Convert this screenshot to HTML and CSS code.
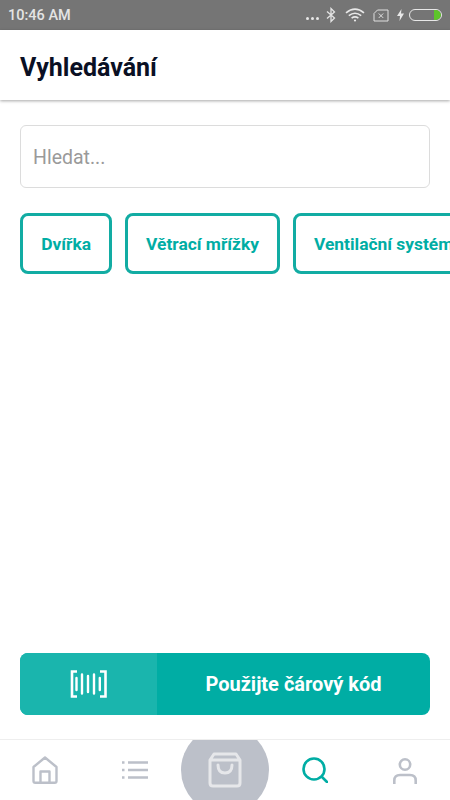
FILE: index.html
```html
<!DOCTYPE html>
<html lang="cs">
<head>
<meta charset="utf-8">
<title>Vyhledávání</title>
<link rel="stylesheet" href="styles.css">
</head>
<body>
<div class="app">
  <div class="status">
    <span class="time">10:46 AM</span>
    <div class="status-icons">
      <span class="dots"><i></i><i></i><i></i></span>
      <svg class="ic-bt" width="10" height="16" viewBox="0 0 10 16" fill="none" stroke="#e4e4e4" stroke-width="1.3"><path d="M1 4.5 8.5 11 5 14.500V1.500L8.500 5 1 11.500"/></svg>
      <svg class="ic-wifi" width="20" height="14" viewBox="0 0 20 14" fill="none" stroke="#e8e8e8" stroke-width="1.6"><path d="M1 4.800Q10-2.500 19 4.800M3.800 7.600Q10 2.800 16.200 7.600M6.600 10.200Q10 7.600 13.400 10.200"/><circle cx="10" cy="12.500" r="1.100" fill="#e8e8e8" stroke="none"/></svg>
      <svg class="ic-sim" width="16" height="13" viewBox="0 0 16 13" fill="none" stroke="#e0e0e0" stroke-width="1"><path d="M4.500 1H15V12H1V4.500ZM5.800 4.500l4.400 4.400M10.200 4.500 5.800 8.900"/></svg>
      <svg class="ic-bolt" width="7" height="12" viewBox="0 0 7 12"><path d="M4.500 0 0 7H3L2.500 12 7 4.500H4Z" fill="#e8e8e8"/></svg>
      <div class="battery"><div class="battery-level"></div></div>
    </div>
  </div>
  <header class="topbar"><h1 class="title">Vyhledávání</h1></header>
  <main class="content">
    <div class="search">Hledat...</div>
    <div class="chips">
      <div class="chip">Dvířka</div>
      <div class="chip">Větrací mřížky</div>
      <div class="chip">Ventilační systémy</div>
    </div>
    <div class="barcode">
      <div class="barcode-icon">
        <svg width="38" height="28" viewBox="0 0 38 28" fill="none" stroke="#fff" stroke-width="2.400"><path d="M7 1.500H2V26.500H7M30 1.500H35.500V26.500H30" stroke-width="2.600"/><path d="M6.500 8V20M12 4.500V23.500M18 6V22M24 4.500V23.500M29.800 8V20" stroke-linecap="round"/></svg>
      </div>
      <div class="barcode-label">Použijte čárový kód</div>
    </div>
  </main>
  <nav class="tabs">
    <div class="tab">
      <svg width="26" height="28" viewBox="0 0 26 28" fill="none" stroke="#bcc0c9" stroke-width="2.400" stroke-linejoin="round"><path d="M13 1.500 1.500 11V25Q1.500 26.800 3.300 26.800H22.700Q24.500 26.800 24.500 25V11ZM8.500 26.800V15.500H17.500V26.800"/></svg>
    </div>
    <div class="tab">
      <svg width="26" height="18" viewBox="0 0 26 18" fill="none" stroke="#bcc0c9" stroke-width="2.600"><path d="M6 1.500H26M6 9H26M6 16.500H26"/><path d="M0 1.500H2.500M0 9H2.500M0 16.500H2.500" stroke-width="2.400"/></svg>
    </div>
    <div class="tab">
      <div class="cart-circle">
        <svg width="34" height="36" viewBox="0 0 34 36" fill="none" stroke="#e6e7ea" stroke-width="3" stroke-linejoin="round" stroke-linecap="round"><path d="M6 2H28L32 8V31Q32 34 29 34H5Q2 34 2 31V8ZM2 8H32M10 13Q10 21 17 21T24 13"/></svg>
      </div>
    </div>
    <div class="tab">
      <svg width="26" height="26" viewBox="0 0 26 26" fill="none" stroke="#00ada4" stroke-width="2.600" stroke-linecap="round"><circle cx="12" cy="12" r="10.500"/><path d="M20 20 25 25"/></svg>
    </div>
    <div class="tab tab-person">
      <svg width="24" height="26" viewBox="0 0 24 26" fill="none" stroke="#bcc0c9" stroke-width="2.600"><circle cx="12" cy="6.500" r="5.200"/><path d="M1.300 26V22.500Q1.300 17 7 17H17Q22.700 17 22.700 22.500V26"/></svg>
    </div>
  </nav>
</div>
</body>
</html>
```
FILE: styles.css
```css
* { box-sizing: border-box; }
html, body { margin: 0; padding: 0; }
body { width: 450px; height: 800px; overflow: hidden; background: #fff; font-family: Roboto, sans-serif; }
.app { width: 450px; height: 800px; display: flex; flex-direction: column; overflow: hidden; }
.status { height: 30px; flex: none; background: #757575; display: flex; align-items: center; justify-content: space-between; padding: 0 8px; }
.time { color: #e4e4e4; font-size: 14.500px; font-weight: 500; }
.status-icons { display: flex; align-items: center; }
.dots { display: flex; gap: 2px; margin: 6px 7px 0 0; }
.dots i { width: 3px; height: 3px; border-radius: 50%; background: #e8e8e8; }
.ic-bt { margin-right: 9px; }
.ic-wifi { margin-right: 8px; }
.ic-sim { margin-right: 8px; }
.ic-bolt { margin-right: 5px; }
.battery { width: 33px; height: 12px; border: 1px solid #e8e8e8; border-radius: 6px; display: flex; justify-content: flex-end; overflow: hidden; }
.battery-level { width: 7px; background: #5dc52a; border-radius: 0 5px 5px 0; }
.topbar { height: 70px; flex: none; background: #fff; display: flex; align-items: center; padding: 4px 20px 0; box-shadow: 0 1px 3px rgba(0,0,0,.35); position: relative; }
.title { margin: 0; font-size: 25px; font-weight: 700; color: #0a1024; }
.content { flex: 1; padding: 25px 0 24px 20px; display: flex; flex-direction: column; min-height: 0; }
.search { width: 410px; height: 63px; border: 1px solid #dcdcdc; border-radius: 6px; padding: 2px 12px 0; display: flex; align-items: center; font-size: 19.500px; color: #9a9a9a; flex: none; }
.chips { display: flex; gap: 12.500px; margin-top: 25px; flex: none; }
.chip { flex: none; height: 61px; padding: 1px 18.250px 0; border: 3px solid #12aca3; border-radius: 8px; display: flex; align-items: center; font-size: 17.400px; font-weight: 700; color: #00ada4; white-space: nowrap; }
.barcode { margin-top: auto; width: 410px; height: 62px; border-radius: 8px; background: #00ada4; display: flex; overflow: hidden; flex: none; }
.barcode-icon { width: 137px; background: #1ab5ad; display: flex; align-items: center; justify-content: center; }
.barcode-label { flex: 1; display: flex; align-items: center; justify-content: center; color: #fff; font-size: 20px; font-weight: 700; }
.tabs { height: 61px; flex: none; border-top: 1px solid #eeeeee; display: grid; grid-template-columns: repeat(5, 90px); grid-template-rows: 60px; overflow: hidden; }
.tab { display: flex; align-items: center; justify-content: center; min-height: 0; }
.tab-person { align-items: flex-start; padding-top: 18px; }
.cart-circle { width: 88px; height: 88px; border-radius: 50%; background: #bcc0c9; flex: none; display: flex; align-items: center; justify-content: center; }
```
